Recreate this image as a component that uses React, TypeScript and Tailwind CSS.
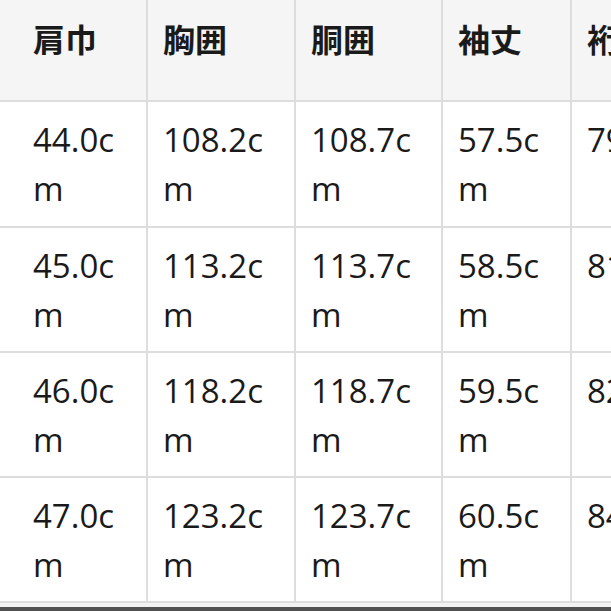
const headers = ['', '肩巾', '胸囲', '胴囲', '袖丈', '裄丈'];

const rows = [
  ['', '44.0cm', '108.2cm', '108.7cm', '57.5cm', '79.5cm'],
  ['', '45.0cm', '113.2cm', '113.7cm', '58.5cm', '81.0cm'],
  ['', '46.0cm', '118.2cm', '118.7cm', '59.5cm', '82.5cm'],
  ['', '47.0cm', '123.2cm', '123.7cm', '60.5cm', '84.0cm'],
];

export default function App() {
  return (
    <div className="w-[611px] h-[611px] overflow-hidden bg-white flex flex-col">
      <div
        className="grid w-[760px] grid-cols-[16px_128px_146px_145px_127px_160px] grid-rows-[100px_124px_123px_123px_123px] gap-[2px] bg-[#dddddd] pb-[2px] text-[#1a1a1a]"
        style={{ fontFamily: '"Open Sans", "Noto Sans CJK JP", sans-serif' }}
      >
        {headers.map((h, i) => (
          <div
            key={'h' + i}
            className="bg-[#f5f5f5] pl-[15px] pr-[15px] pt-[14px] text-[32px] leading-[49px] font-bold"
            style={{ fontFamily: '"Noto Sans CJK JP", "Open Sans", sans-serif' }}
          >
            {h}
          </div>
        ))}
        {rows.map((r, ri) =>
          r.map((c, ci) => (
            <div
              key={ri + '-' + ci}
              className="bg-white pl-[15px] pr-[15px] pt-[13px] text-[33px] leading-[49px] break-all"
            >
              {c}
            </div>
          ))
        )}
      </div>
      <div className="h-[4px] bg-[#f2f2f2]" />
      <div className="h-[4px] bg-[#505050]" />
    </div>
  );
}
